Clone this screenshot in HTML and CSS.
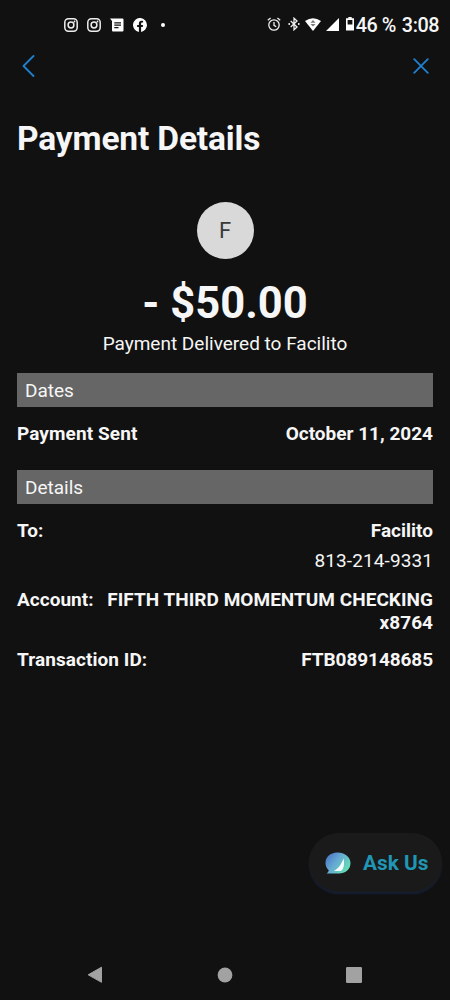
FILE: index.html
```html
<!DOCTYPE html>
<html lang="en">
<head>
<meta charset="utf-8">
<title>Payment Details</title>
<link rel="stylesheet" href="styles.css">
</head>
<body>
<div class="screen">
  <header class="status">
    <div class="status-left">
      <svg class="insta" width="14" height="14" viewBox="0 0 14 14"><rect x=".8" y=".8" width="12.4" height="12.4" rx="3.6"/><circle cx="7" cy="7" r="2.9"/><circle class="dot" cx="10.5" cy="3.5" r=".9"/></svg>
      <svg class="insta" width="14" height="14" viewBox="0 0 14 14"><rect x=".8" y=".8" width="12.4" height="12.4" rx="3.6"/><circle cx="7" cy="7" r="2.9"/><circle class="dot" cx="10.5" cy="3.5" r=".9"/></svg>
      <svg class="message" width="14" height="14" viewBox="0 0 14 14"><path class="fill" d="M0 .5H12.500Q13.500 .5 13.500 1.500V12.500Q13.500 13.500 12.500 13.500H3Q2 13.500 2 12.500V3Z"/><path class="cut" d="M4.300 4.800H11M4.300 7.200H11M4.300 9.600H8.500"/></svg>
      <svg class="facebook" width="14" height="14" viewBox="0 0 24 24"><path class="fill" d="M24 12A12 12 0 1 0 10.100 23.800V15.500H7.100V12H10.100V9.400C10.100 6.400 11.900 4.700 14.600 4.700C15.900 4.700 17.300 5 17.300 5V7.900H15.800C14.300 7.900 13.900 8.800 13.900 9.700V12H17.200L16.700 15.500H13.900V23.800A12 12 0 0 0 24 12Z"/></svg>
      <span class="more"></span>
    </div>
    <div class="status-right">
      <svg class="line clock" width="14" height="15" viewBox="0 0 14 15"><circle cx="7" cy="8" r="5.200"/><path d="M7 5V8.300L9.200 9.700M.8 3.200L3.600 1M13.200 3.200L10.400 1"/></svg>
      <svg class="line bluetooth" width="12" height="14" viewBox="0 0 12 14"><path d="M2.700 4L9 10L6 12.800V1.200L9 4L2.700 10"/><circle class="fill nostroke" cx="1.200" cy="7" r=".9"/><circle class="fill nostroke" cx="10.800" cy="7" r=".9"/></svg>
      <svg class="wifi" width="16" height="13" viewBox="0 0 16 13"><path class="fill" d="M0 3Q8-2.400 16 3L8 13Z"/><path class="arrow" d="M5.500 4.700L8 2.100L10.500 4.700ZM5.500 5.900L8 8.500L10.500 5.900Z"/></svg>
      <svg class="signal" width="13" height="13" viewBox="0 0 13 13"><path class="fill" d="M13 0V13H0Z"/></svg>
      <svg class="battery" width="8" height="14" viewBox="0 0 8 14"><path class="fill" d="M2.300 0H5.700V1.800H2.300Z"/><path class="shell" d="M.8 2.100H7.200V12.800H.8Z"/><path class="fill" d="M1 7.500H7V13H1Z"/></svg>
      <span class="percent">46 %</span>
      <span class="time">3:08</span>
    </div>
  </header>
  <nav class="nav">
    <svg width="13" height="22" viewBox="0 0 13 22"><path d="M11.500 1L1.500 11L11.500 21"/></svg>
    <svg width="16" height="16" viewBox="0 0 16 16"><path d="M1.200 1.200L14.800 14.800M14.800 1.200L1.200 14.800"/></svg>
  </nav>
  <main class="content">
    <h1 class="title">Payment Details</h1>
    <div class="avatar">F</div>
    <div class="amount">- $50.00</div>
    <div class="summary">Payment Delivered to Facilito</div>
    <h2 class="section">Dates</h2>
    <div class="row dates"><span class="sent">Payment Sent</span><span class="date">October 11, 2024</span></div>
    <h2 class="section">Details</h2>
    <div class="row to"><span>To:</span><span>Facilito</span></div>
    <div class="phone">813-214-9331</div>
    <div class="row account"><span>Account:</span><span class="value">FIFTH THIRD MOMENTUM CHECKING<br>x8764</span></div>
    <div class="row"><span class="txn-label">Transaction ID:</span><span class="txn">FTB089148685</span></div>
  </main>
  <div class="ask">
    <svg width="26" height="22" viewBox="0 0 26 22">
      <defs><linearGradient id="bubble" x1="0" y1="0" x2="1" y2=".65"><stop offset=".1" stop-color="#4b78c4"/><stop offset=".5" stop-color="#66a9d3"/><stop offset="1" stop-color="#62dfb4"/></linearGradient></defs>
      <path fill="url(#bubble)" d="M12 .5C19 .2 25.500 4.500 25.500 11C25.500 17.500 20 21.500 14 21.500H1.500Q3.300 20.500 3.800 18.300Q.5 15.500 .5 11C.5 5 5.500 .7 12 .5Z"/>
      <path fill="#f4fbff" d="M18.700 6.500C19.800 12.500 18.500 19 15 19H9C14 16 16.300 12 18.700 6.500Z"/>
    </svg>
    <span>Ask Us</span>
  </div>
  <footer class="system">
    <svg width="16" height="18" viewBox="0 0 16 18"><path d="M14.500 1.200V16.300L1.200 8.800Z" stroke="#a2a2a2" stroke-linejoin="round"/></svg>
    <svg width="16" height="16" viewBox="0 0 16 16"><circle cx="8" cy="8" r="7.400"/></svg>
    <svg width="16" height="16" viewBox="0 0 16 16"><rect width="16" height="16" rx="1.200"/></svg>
  </footer>
</div>
</body>
</html>
```
FILE: styles.css
```css
* { box-sizing: border-box; }
body { margin: 0; background: #111; color: #f6f6f6; font-family: Roboto, sans-serif; }
svg { display: block; flex: none; }
.screen { position: relative; width: 450px; height: 1000px; display: flex; flex-direction: column; overflow: hidden; }
.status { height: 48px; display: flex; justify-content: space-between; padding: 0 11px 0 64px; }
.status-left, .status-right { display: flex; align-items: center; }
.status-left { gap: 9px; padding-top: 1px; }
.fill { fill: #fff; }
.nostroke { stroke: none; }
.insta { fill: none; stroke: #eee; stroke-width: 1.5; }
.insta .dot { fill: #eee; stroke: none; }
.cut { stroke: #111; stroke-width: 1.2; }
.more { width: 4px; height: 4px; margin-left: 5px; border-radius: 50%; background: #fff; }
.status-right { font-size: 19.8px; line-height: 22px; font-weight: 500; white-space: nowrap; letter-spacing: -.45px; }
.line { fill: none; stroke: #eee; stroke-width: 1.3; }
.clock { margin-right: 7px; }
.bluetooth { margin-right: 5px; }
.wifi { margin-right: 5px; }
.arrow { fill: #777; }
.signal { margin-right: 7px; }
.shell { fill: none; stroke: #fff; stroke-width: 1.6; }
.percent { margin: 3px 6px 0 2px; }
.time { margin-top: 3px; }
.nav { height: 36px; display: flex; justify-content: space-between; align-items: center; padding: 0 21px 0 22px; }
.nav path { fill: none; stroke: #1f80d0; stroke-width: 1.8; stroke-linecap: round; stroke-linejoin: round; }
.content { padding: 33px 17px 0 17px; display: flex; flex-direction: column; font-size: 19px; line-height: 22px; }
.title { margin: 0; font-size: 33.5px; line-height: 43px; font-weight: 700; white-space: nowrap; letter-spacing: -.15px; }
.avatar { width: 57px; height: 57px; margin: 41.5px auto 0; border-radius: 50%; background: #d9d9d9; color: #3a3a3a; font-size: 22px; line-height: 58px; text-align: center; }
.amount { margin-top: 20px; font-size: 43.5px; line-height: 50px; font-weight: 700; text-align: center; white-space: pre; }
.summary { margin-top: 4px; text-align: center; }
.section { margin: 18px 0 0; height: 34px; padding: 1px 8px 0; background: #666; font-size: 19px; font-weight: 400; line-height: 34px; }
.row { display: flex; justify-content: space-between; font-weight: 700; white-space: nowrap; }
.dates { margin-top: 16px; margin-bottom: 8px; }
.sent { letter-spacing: .1px; }
.dates + .section { margin-top: 17px; }
.to { margin-top: 16px; }
.phone { margin-top: 8px; text-align: right; letter-spacing: .1px; }
.account { margin: 16px 0 15px; line-height: 23px; letter-spacing: .03px; }
.value { text-align: right; }
.txn-label { letter-spacing: .07px; }
.txn { letter-spacing: -.08px; }
.ask { position: absolute; left: 309px; top: 833px; width: 133px; height: 59px; display: flex; align-items: center; gap: 12px; padding-left: 16px; border-radius: 30px; background: #1a1a1a; box-shadow: 0 2px 2px #162036; color: #2196b4; font-size: 20.8px; font-weight: 700; white-space: nowrap; }
.system { margin-top: auto; height: 50px; display: flex; align-items: center; justify-content: space-between; padding: 0 88px 0 87px; }
.system svg { fill: #a2a2a2; }
```
